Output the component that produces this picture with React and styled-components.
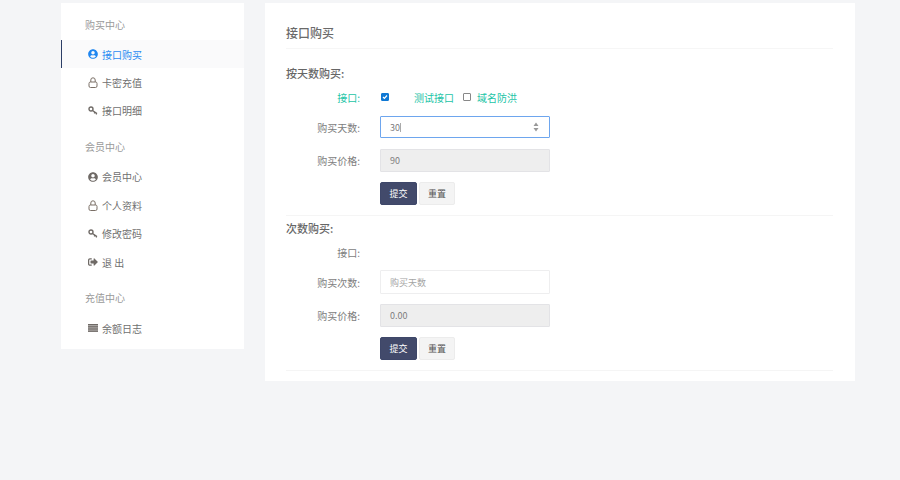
import React from "react";
import styled, { createGlobalStyle } from "styled-components";
import { FaUserCircle, FaSignOutAlt } from "react-icons/fa";

const Global = createGlobalStyle`
  html, body { margin: 0; padding: 0; background: #f4f5f7; }
  body { font-family: "Noto Sans CJK SC", "Noto Sans", sans-serif; font-size: 10px; color: #666; }
`;

const Page = styled.div`
  display: flex;
  align-items: flex-start;
  gap: 21px;
  padding: 3px 0 0 61px;
  width: 900px;
  height: 480px;
  box-sizing: border-box;
  overflow: hidden;
`;
const Sidebar = styled.nav`
  width: 183px;
  height: 346px;
  background: #fff;
  flex: none;
`;
const GroupTitle = styled.div`
  height: 37px;
  padding: ${p => p.$pt}px 0 0 24px;
  display: flex;
  align-items: center;
  font-size: 10px;
  color: #9a9a9a;
  box-sizing: border-box;
  margin-top: ${p => (p.$first ? 0 : "0.6px")};
`;
const Item = styled.a`
  height: 28.4px;
  display: flex;
  align-items: center;
  gap: 4px;
  padding-left: ${p => (p.$active ? "26px" : "27px")};
  font-size: 10px;
  box-sizing: border-box;
  color: ${p => (p.$active ? "#2a8cf2" : "#707070")};
  background: ${p => (p.$active ? "#fafafb" : "transparent")};
  border-left: ${p => (p.$active ? "1px solid #2c3e66" : "none")};
`;
const IconSlot = styled.span`
  width: 10px;
  height: 11px;
  display: inline-flex;
  align-items: center;
  justify-content: center;
  font-size: 10px;
  color: ${p => (p.$active ? "#1f86f0" : "#6f6a66")};
`;
const Main = styled.main`
  width: 590px;
  height: 378px;
  background: #fff;
  padding: 0 22px 0 21px;
  box-sizing: border-box;
  flex: none;
`;
const Title = styled.h1`
  margin: 0;
  height: 46px;
  display: flex;
  align-items: center;
  padding-top: 13px;
  box-sizing: border-box;
  font-size: 12px;
  font-weight: 500;
  color: #6a6a6a;
  border-bottom: 1px solid #f6f6f6;
`;
const SectionTitle = styled.h2`
  margin: 0;
  font-size: 11px;
  line-height: 14px;
  font-weight: 500;
  color: #666;
  padding-top: ${p => p.$top}px;
`;
const Row = styled.div`
  display: flex;
  align-items: center;
  height: ${p => p.$h}px;
  margin-top: ${p => p.$mt}px;
`;
const Label = styled.label`
  width: 74px;
  text-align: right;
  font-size: 10px;
  color: ${p => (p.$teal ? "#22c4a6" : "#7d7d7d")};
  flex: none;
`;
const Field = styled.div`
  margin-left: 20px;
  width: 170px;
  height: 100%;
  box-sizing: border-box;
  position: relative;
  display: flex;
  align-items: center;
  padding-left: 9px;
  font-size: 9px;
  color: ${p => (p.$placeholder ? "#a5a5a5" : "#7d7d7d")};
  background: ${p => (p.$disabled ? "#eeeeee" : "#fff")};
  border: 1px solid ${p => (p.$focus ? "#6ea6ee" : p.$disabled ? "#e3e3e6" : "#eeeeef")};
  border-radius: 1px;
`;
const Caret = styled.span`
  width: 1px;
  height: 9px;
  background: #aaa;
`;
const Spinner = styled.svg`
  position: absolute;
  right: 10px;
  top: 5px;
  width: 6px;
  height: 10px;
`;
const Checks = styled.div`
  margin-left: 20px;
  display: flex;
  align-items: center;
  color: #22c4a6;
  font-size: 10px;
`;
const CheckBox = styled.span`
  width: 8px;
  height: 8px;
  box-sizing: border-box;
  border-radius: 1px;
  display: inline-flex;
  border: 1px solid ${p => (p.$on ? "#0f78d4" : "#888")};
  background: ${p => (p.$on ? "#0f78d4" : "#fff")};
  margin-left: ${p => p.$ml}px;
  margin-right: ${p => p.$mr}px;
`;
const Buttons = styled.div`
  margin-left: 20px;
  display: flex;
  gap: 2px;
  height: 100%;
`;
const Btn = styled.button`
  font: inherit;
  font-size: 9px;
  width: ${p => (p.$primary ? 37 : 36)}px;
  padding: 0;
  border-radius: 2px;
  border: 1px solid ${p => (p.$primary ? "#3e4769" : "#ececec")};
  background: ${p => (p.$primary ? "#424a6b" : "#f4f4f4")};
  color: ${p => (p.$primary ? "#fff" : "#555")};
`;
const Divider = styled.div`
  border-top: 1px solid #f5f5f5;
  margin-top: ${p => p.$mt}px;
`;

const LockIcon = () => (
  <svg width="10" height="11" viewBox="0 0 10 11" fill="none" stroke="#7a6f66" strokeWidth="1">
    <rect x="1" y="5" width="8" height="5.5" rx="1.5" />
    <path d="M2.8 5V3a2.2 2.2 0 0 1 4.4 0v2" />
  </svg>
);
const KeyIcon = () => (
  <svg width="10" height="9" viewBox="0 0 10 9" fill="none" stroke="#6f6a66">
    <circle cx="3" cy="3" r="2" strokeWidth="1.4" />
    <path d="M4.5 4.5L9 7.6M7 6.2L6.2 7.4M8.6 7.4L8 8.4" strokeWidth="1.3" />
  </svg>
);
const ListIcon = () => (
  <svg width="10" height="8" viewBox="0 0 10 8" fill="#6f6a66">
    <rect width="10" height="1.6" y="0" />
    <rect width="10" height="1.6" y="2.1" />
    <rect width="10" height="1.6" y="4.2" />
    <rect width="10" height="1.6" y="6.3" />
  </svg>
);

const MenuItem = ({ icon, active, children }) => (
  <Item $active={active}>
    <IconSlot $active={active}>{icon}</IconSlot>
    {children}
  </Item>
);

export default function App() {
  return (
    <>
      <Global />
      <Page>
        <Sidebar>
          <GroupTitle $first $pt={6}>购买中心</GroupTitle>
          <MenuItem active icon={<FaUserCircle />}>接口购买</MenuItem>
          <MenuItem icon={<LockIcon />}>卡密充值</MenuItem>
          <MenuItem icon={<KeyIcon />}>接口明细</MenuItem>
          <GroupTitle $pt={4}>会员中心</GroupTitle>
          <MenuItem icon={<FaUserCircle />}>会员中心</MenuItem>
          <MenuItem icon={<LockIcon />}>个人资料</MenuItem>
          <MenuItem icon={<KeyIcon />}>修改密码</MenuItem>
          <MenuItem icon={<FaSignOutAlt />}>退 出</MenuItem>
          <GroupTitle $pt={4}>充值中心</GroupTitle>
          <MenuItem icon={<ListIcon />}>余额日志</MenuItem>
        </Sidebar>
        <Main>
          <Title>接口购买</Title>
          <SectionTitle $top={17}>按天数购买:</SectionTitle>
          <Row $h={14} $mt={10}>
            <Label $teal>接口:</Label>
            <Checks>
              <CheckBox $on $ml={1} $mr={25}>
                <svg width="6" height="6" viewBox="0 0 6 6"><path d="M1 3l1.4 1.4L5 1.5" stroke="#fff" strokeWidth="1.2" fill="none" /></svg>
              </CheckBox>
              测试接口
              <CheckBox $ml={9} $mr={6} />
              域名防洪
            </Checks>
          </Row>
          <Row $h={22} $mt={12}>
            <Label>购买天数:</Label>
            <Field $focus>
              30<Caret />
              <Spinner viewBox="0 0 6 10"><path d="M3 0.5L5.5 4H0.5zM3 9.5L0.5 6h5z" fill="#999" /></Spinner>
            </Field>
          </Row>
          <Row $h={23} $mt={11}>
            <Label>购买价格:</Label>
            <Field $disabled>90</Field>
          </Row>
          <Row $h={23} $mt={10}>
            <Label />
            <Buttons>
              <Btn $primary>提交</Btn>
              <Btn>重置</Btn>
            </Buttons>
          </Row>
          <Divider $mt={10} />
          <SectionTitle $top={5}>次数购买:</SectionTitle>
          <Row $h={14} $mt={10}>
            <Label>接口:</Label>
          </Row>
          <Row $h={24} $mt={11}>
            <Label>购买次数:</Label>
            <Field $placeholder>购买天数</Field>
          </Row>
          <Row $h={23} $mt={10}>
            <Label>购买价格:</Label>
            <Field $disabled>0.00</Field>
          </Row>
          <Row $h={23} $mt={10}>
            <Label />
            <Buttons>
              <Btn $primary>提交</Btn>
              <Btn>重置</Btn>
            </Buttons>
          </Row>
          <Divider $mt={10} />
        </Main>
      </Page>
    </>
  );
}
